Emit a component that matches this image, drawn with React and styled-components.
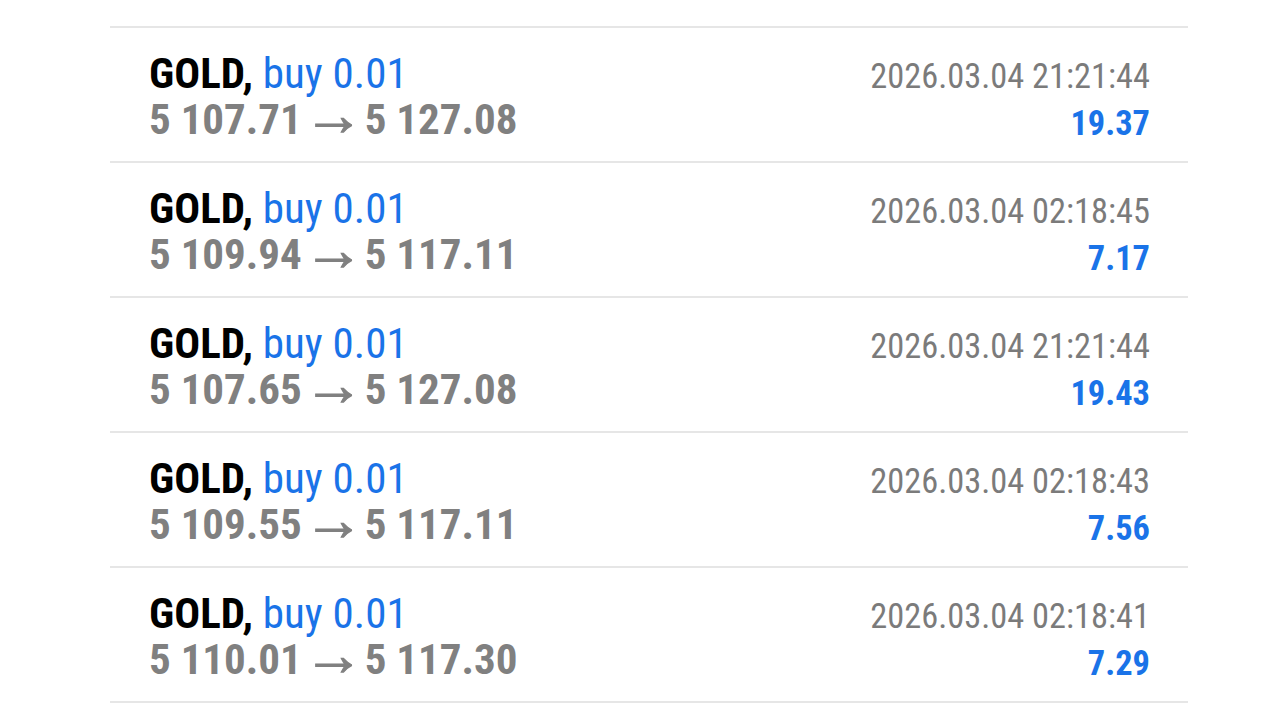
import React from 'react';
import styled, { createGlobalStyle } from 'styled-components';

const GlobalStyle = createGlobalStyle`
  html, body {
    margin: 0;
    padding: 0;
    background: #ffffff;
    overflow: hidden;
  }
  body {
    font-family: 'Roboto Condensed', Roboto, sans-serif;
    font-stretch: condensed;
  }
`;

const Page = styled.div`
  width: 1267px;
  height: 713px;
  overflow: hidden;
  background: #ffffff;
`;

const List = styled.div`
  margin-top: -107px;
  margin-left: 110px;
  width: 1078px;
`;

const Row = styled.div`
  display: flex;
  justify-content: space-between;
  align-items: flex-start;
  padding: 22px 38px 19px 39px;
  border-bottom: 2px solid #e6e6e6;
  height: 92px;
`;

const Left = styled.div`
  display: flex;
  flex-direction: column;
`;

const Right = styled.div`
  display: flex;
  flex-direction: column;
  align-items: flex-end;
  padding-top: 3px;
`;

const Title = styled.div`
  font-size: 43px;
  line-height: 46px;
  white-space: nowrap;
`;

const Symbol = styled.span`
  font-weight: 700;
  color: #000000;
`;

const Deal = styled.span`
  color: #1a73e8;
`;

const Prices = styled.div`
  font-size: 43px;
  line-height: 46px;
  font-weight: 700;
  color: #808080;
  white-space: nowrap;
`;

const Arrow = styled.span`
  display: inline-block;
  font-family: Roboto, sans-serif;
  font-weight: 700;
  font-stretch: normal;
  -webkit-text-stroke: 0.9px #808080;
  transform: translateY(-4px) scale(1.4, 1.35);
`;

const Time = styled.div`
  font-size: 34.4px;
  line-height: 46px;
  color: #7b7b7b;
  white-space: nowrap;
`;

const Profit = styled.div`
  font-size: 34.4px;
  line-height: 46px;
  margin-top: 1px;
  font-weight: 700;
  color: ${p => (p.$loss ? '#e53935' : '#1a73e8')};
  white-space: nowrap;
`;

const trades = [
  { open: '5 109.12', close: '5 108.11', time: '2026.03.04 02:18:39', profit: '-1.01', loss: true },
  { open: '5 107.71', close: '5 127.08', time: '2026.03.04 21:21:44', profit: '19.37' },
  { open: '5 109.94', close: '5 117.11', time: '2026.03.04 02:18:45', profit: '7.17' },
  { open: '5 107.65', close: '5 127.08', time: '2026.03.04 21:21:44', profit: '19.43' },
  { open: '5 109.55', close: '5 117.11', time: '2026.03.04 02:18:43', profit: '7.56' },
  { open: '5 110.01', close: '5 117.30', time: '2026.03.04 02:18:41', profit: '7.29' },
  { open: '5 108.90', close: '5 117.30', time: '2026.03.04 02:18:40', profit: '8.40' },
];

export default function App() {
  return (
    <Page>
      <GlobalStyle />
      <List>
        {trades.map((t, i) => (
          <Row key={i}>
            <Left>
              <Title>
                <Symbol>GOLD,</Symbol> <Deal>buy 0.01</Deal>
              </Title>
              <Prices>
                {t.open} <Arrow>→</Arrow> {t.close}
              </Prices>
            </Left>
            <Right>
              <Time>{t.time}</Time>
              <Profit $loss={t.loss}>{t.profit}</Profit>
            </Right>
          </Row>
        ))}
      </List>
    </Page>
  );
}
